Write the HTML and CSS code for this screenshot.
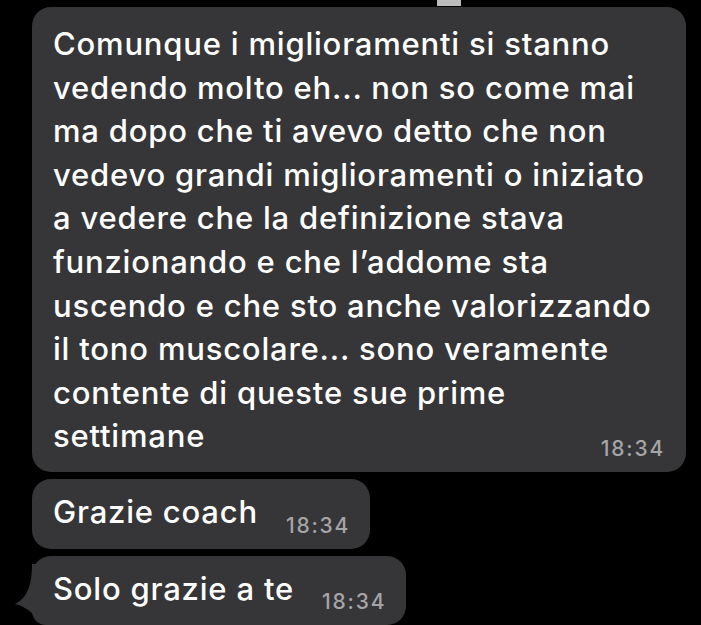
FILE: index.html
```html
<!DOCTYPE html>
<html lang="it">
<head>
<meta charset="utf-8">
<title>Chat</title>
<link rel="stylesheet" href="styles.css">
</head>
<body>
<div class="chat">
  <div class="top-strip"><span class="top-mark"></span></div>

  <div class="bubble bubble-long">
    <p class="msg-text">Comunque i miglioramenti si stanno<br>vedendo molto eh... non so come mai<br>ma dopo che ti avevo detto che non<br>vedevo grandi miglioramenti o iniziato<br>a vedere che la definizione stava<br>funzionando e che l’addome sta<br>uscendo e che sto anche valorizzando<br>il tono muscolare... sono veramente<br>contente di queste sue prime<br>settimane</p>
    <div class="msg-time msg-time-below">18:34</div>
  </div>

  <div class="bubble bubble-short">
    <p class="msg-text">Grazie coach</p>
    <span class="msg-time">18:34</span>
  </div>

  <div class="bubble bubble-short bubble-tail">
    <p class="msg-text">Solo grazie a te</p>
    <span class="msg-time">18:34</span>
    <svg class="tail" width="30" height="56" viewBox="0 0 30 56" aria-hidden="true">
      <path d="M18 0 C18 22 13 34 1 40 C9 42 15 46 20 51 L30 51 L30 0 Z" fill="#363638"/>
    </svg>
  </div>
</div>
</body>
</html>
```

FILE: styles.css
```css
html, body {
  margin: 0;
  padding: 0;
  background: #000;
}

body {
  width: 701px;
  height: 625px;
  overflow: hidden;
  font-family: "Inter", "Liberation Sans", sans-serif;
  -webkit-font-smoothing: antialiased;
}

.chat {
  display: flex;
  flex-direction: column;
  align-items: flex-start;
  gap: 7px;
  padding-left: 32px;
}

.top-strip {
  height: 0;
  width: 100%;
  display: flex;
}

.top-mark {
  display: block;
  width: 24px;
  height: 6px;
  margin-left: 405px;
  background: #bcbcbc;
}

.bubble {
  position: relative;
  background: #363638;
  border-radius: 19px;
  color: #fff;
  box-sizing: border-box;
}

.bubble-long {
  width: 654px;
  padding: 15px 23px 11px 21px;
}

.msg-text {
  margin: 0;
  font-size: 31px;
  line-height: 43.6px;
  font-weight: 500;
  letter-spacing: 0.8px;
  white-space: nowrap;
}

.msg-time {
  font-size: 21px;
  line-height: 24px;
  font-weight: 500;
  letter-spacing: 1.8px;
  color: #a5a5a8;
  white-space: nowrap;
}

.msg-time-below {
  text-align: right;
  margin-top: -21px;
  margin-right: -2px;
}

.bubble-short {
  display: flex;
  align-items: flex-end;
  gap: 28px;
  padding: 11px 20px 11px 21px;
}

.bubble-short .msg-text {
  margin-bottom: 4px;
}

.bubble-tail {
  border-bottom-left-radius: 14px;
}

.tail {
  position: absolute;
  left: -18px;
  bottom: 5px;
}
```
